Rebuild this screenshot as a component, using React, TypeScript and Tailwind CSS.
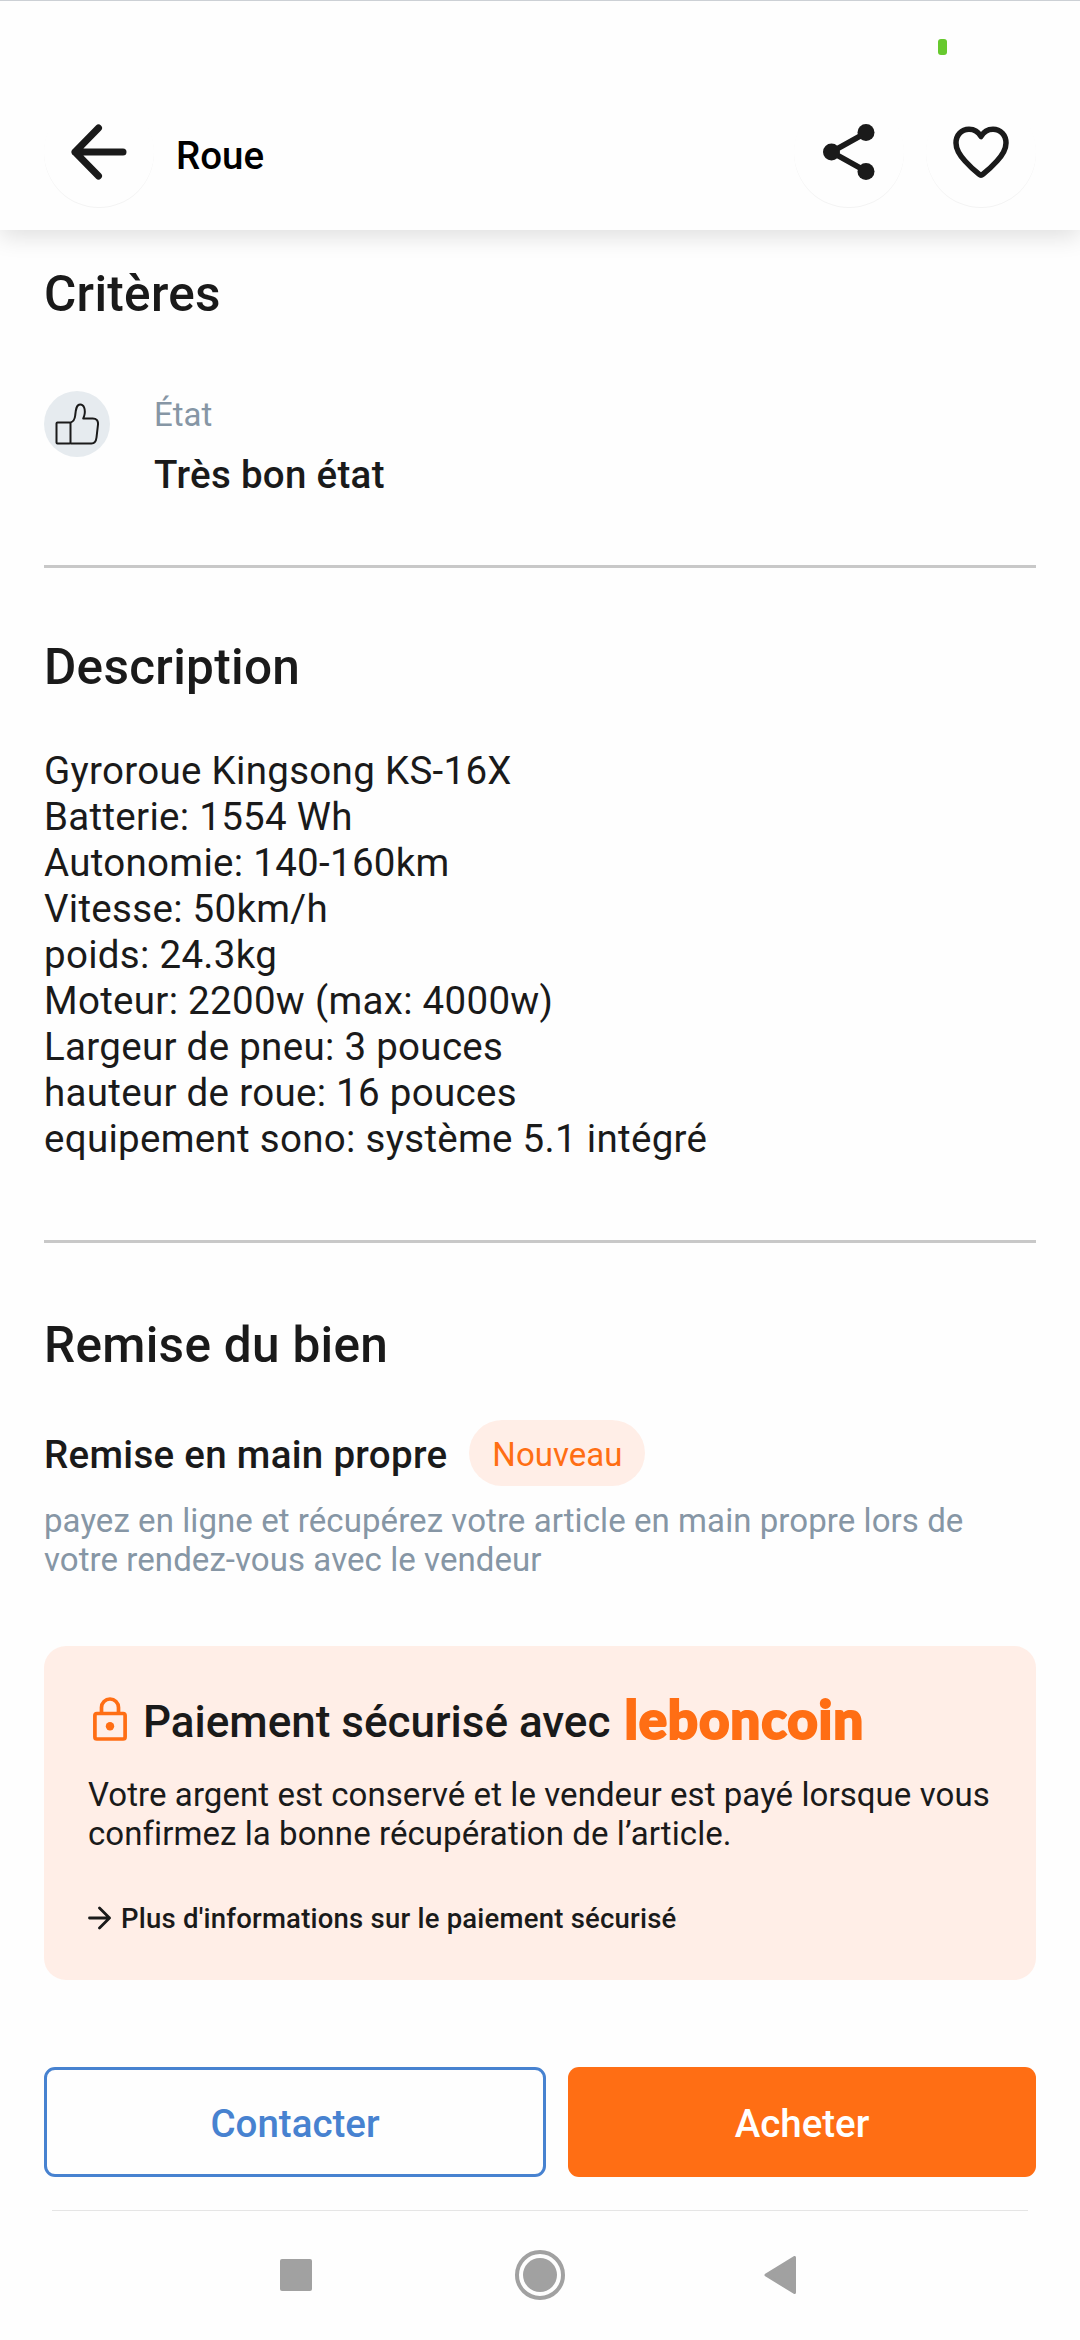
import type { ReactNode } from "react";

const description = [
  "Gyroroue Kingsong KS-16X",
  "Batterie: 1554 Wh",
  "Autonomie: 140-160km",
  "Vitesse: 50km/h",
  "poids: 24.3kg",
  "Moteur: 2200w (max: 4000w)",
  "Largeur de pneu: 3 pouces",
  "hauteur de roue: 16 pouces",
  "equipement sono: système 5.1 intégré",
];

function RoundButton({ label, children }: { label: string; children: ReactNode }) {
  return (
    <button
      aria-label={label}
      className="flex size-[110px] items-center justify-center rounded-full shadow-[0_1px_0_#f3f3f3]"
    >
      {children}
    </button>
  );
}

function ArrowLeft() {
  return (
    <svg width="56" height="56" viewBox="0 0 56 56" fill="none" stroke="#1a1a1a" strokeWidth="7" strokeLinecap="round" strokeLinejoin="round">
      <path d="M27.5 4 4 28l23.5 24M4 28h48" />
    </svg>
  );
}

function ShareIcon() {
  return (
    <svg width="52" height="56" viewBox="0 0 52 56" fill="#1a1a1a">
      <path d="M8.5 28l35-19.500M8.500 28l35 19.500" stroke="#1a1a1a" strokeWidth="5.500" />
      <circle cx="8.500" cy="28" r="8.500" />
      <circle cx="43" cy="8.500" r="8.500" />
      <circle cx="43" cy="47.500" r="8.500" />
    </svg>
  );
}

function HeartIcon() {
  return (
    <svg width="56" height="52" viewBox="1 0 56 52" fill="none" stroke="#1a1a1a" strokeWidth="5.500" strokeLinejoin="round">
      <path d="M29 10.500C26.500 6 22 3.200 17 3.200 9.500 3.200 4 9 4 17c0 6.500 3.500 12 9 18 4.500 5 10 10 14 13.200 1.200 1 2.800 1 4 0C35 45 40.500 40 45 35c5.500-6 9-11.500 9-18 0-8-5.500-13.800-13-13.800C36 3.200 31.500 6 29 10.500Z" />
    </svg>
  );
}

function ThumbUp() {
  return (
    <svg width="44" height="42" viewBox="0 0 44 42" fill="none" stroke="#1a1a1a" strokeWidth="2" strokeLinejoin="round">
      <rect x="1.500" y="19.500" width="14" height="21" rx="1" />
      <path d="M15.500 19.500c3.500-1 4.300-3.500 4.700-7 .5-5 .8-11 5-11 4 0 5 5 4.500 9-.3 2.500-1 3.500-1.500 5h9.500c4 0 5.600 2.500 5.300 6l-1.500 13c-.5 4-1.800 6-5 6H15.500" />
    </svg>
  );
}

function LockIcon() {
  return (
    <svg width="34" height="44" viewBox="0 0 34 44" fill="none" stroke="#ff6e14" strokeWidth="3.700">
      <rect x="1.900" y="16.500" width="30.200" height="25.500" rx="2" />
      <path d="M8.500 16V10.500a8.500 8.500 0 0 1 17 0V16" />
      <circle cx="17" cy="29.200" r="4.200" fill="#ff6e14" stroke="none" />
    </svg>
  );
}

function Divider() {
  return <hr className="h-[3px] border-0 bg-[#c8c8c8]" />;
}

function SectionTitle({ children }: { children: ReactNode }) {
  return <h2 className="text-[49.5px] font-medium leading-[58px] tracking-[0.3px]">{children}</h2>;
}

export default function App() {
  return (
    <div className="flex h-[2340px] w-[1080px] flex-col bg-[#fefefe] font-['Roboto',sans-serif] text-[#1a1a1a]">
      <header className="h-[230px] border-t border-[#ccd0d5] bg-[#fefefe] shadow-[0_7px_22px_rgba(0,0,0,0.12)]">
        <div className="flex h-[96px] justify-end pr-[133px] pt-[38px]">
          <span className="h-4 w-[9px] rounded-[3px] bg-[#67c92e]" />
        </div>
        <div className="flex h-[110px] items-center px-[44px]">
          <RoundButton label="Retour">
            <ArrowLeft />
          </RoundButton>
          <h1 className="ml-[22px] mt-2 text-[38.5px] font-medium leading-[46px] text-black">Roue</h1>
          <div className="ml-auto flex gap-[22px]">
            <RoundButton label="Partager">
              <ShareIcon />
            </RoundButton>
            <RoundButton label="Favori">
              <HeartIcon />
            </RoundButton>
          </div>
        </div>
      </header>

      <main className="flex flex-col px-[44px]">
        <section className="mt-[35px] h-[300px]">
          <SectionTitle>Critères</SectionTitle>
          <div className="mt-[68px] flex gap-[44px]">
            <div className="flex size-[66px] items-center justify-center rounded-full bg-[#e6ebef]">
              <ThumbUp />
            </div>
            <div className="pt-1">
              <p className="text-[33px] leading-[39px] text-[#8696a5]">État</p>
              <p className="mt-[18px] text-[38.5px] font-medium leading-[46px] tracking-[0.3px]">Très bon état</p>
            </div>
          </div>
        </section>
        <Divider />

        <section className="h-[672px] pt-[70px]">
          <SectionTitle>Description</SectionTitle>
          <div className="mt-[52px] text-[38.5px] leading-[46px] tracking-[0.3px]">
            {description.map((line) => (
              <p key={line}>{line}</p>
            ))}
          </div>
        </section>
        <Divider />

        <section className="pt-[73px]">
          <SectionTitle>Remise du bien</SectionTitle>
          <div className="mt-[46px] flex h-[66px] items-center gap-[22px]">
            <h3 className="pt-[3px] text-[38.5px] font-medium leading-[46px] tracking-[0.3px]">Remise en main propre</h3>
            <span className="flex h-[66px] items-center rounded-full bg-[#ffeee7] px-[23px] pt-[3px] text-[33px] text-[#ff6e14]">
              Nouveau
            </span>
          </div>
          <p className="mt-[15px] text-[33px] leading-[39px] tracking-[0.07px] text-[#8696a5]">
            payez en ligne et récupérez votre article en main propre lors de
            <br />
            votre rendez-vous avec le vendeur
          </p>
        </section>

        <section className="mt-[67px] h-[334px] rounded-[22px] bg-[#ffeee7] px-[44px] pt-[48px]">
          <div className="flex h-[52px] items-center">
            <span className="mb-[2px] ml-[5px]">
              <LockIcon />
            </span>
            <h3 className="ml-[16px] pt-1 text-[44px] font-medium leading-[52px]">Paiement sécurisé avec</h3>
            <span className="mb-[3px] ml-[14px] font-['Lato',sans-serif] text-[53px] font-black leading-[52px] tracking-[0.8px] text-[#ff6e14] [-webkit-text-stroke:2px_#ff6e14]">
              leboncoin
            </span>
          </div>
          <p className="mt-[29px] whitespace-nowrap text-[33px] leading-[39px] tracking-[0.07px]">
            Votre argent est conservé et le vendeur est payé lorsque vous
            <br />
            confirmez la bonne récupération de l’article.
          </p>
          <a className="mt-[49px] flex items-center gap-[10px] text-[27.5px] font-medium leading-[32px] tracking-[0.22px]">
            <svg className="mb-[2px]" width="23" height="24" viewBox="0 0 23 24" fill="none" stroke="#1a1a1a" strokeWidth="2.800" strokeLinecap="round" strokeLinejoin="round">
              <path d="M1.500 12h20M11.500 2l10 10-10 10" />
            </svg>
            <span className="pt-px">Plus d'informations sur le paiement sécurisé</span>
          </a>
        </section>

        <div className="mt-[87px] flex h-[110px] gap-[22px] text-[38.5px] font-medium">
          <button className="w-[502px] rounded-[11px] border-[3px] border-[#4782d0] pt-[3px] text-[#4782d0]">Contacter</button>
          <button className="flex-1 rounded-[11px] bg-[#ff6e14] pt-[3px] text-white">Acheter</button>
        </div>
      </main>

      <hr className="mx-[52px] mt-[33px] h-px border-0 bg-[#e5e5e5]" />

      <nav className="flex h-[128px] items-center pl-[280px]">
        <span className="size-[32px] rounded-[2px] bg-[#a1a1a1]" />
        <span className="ml-[203px] flex size-[50px] items-center justify-center rounded-full border-4 border-[#a1a1a1]">
          <span className="size-[34px] shrink-0 rounded-full bg-[#a1a1a1]" />
        </span>
        <svg className="ml-[199px]" width="32" height="38" viewBox="0 0 32 38" fill="#a1a1a1" stroke="#a1a1a1" strokeWidth="3" strokeLinejoin="round">
          <path d="M2 19 30.500 1.500v35Z" />
        </svg>
      </nav>
    </div>
  );
}
